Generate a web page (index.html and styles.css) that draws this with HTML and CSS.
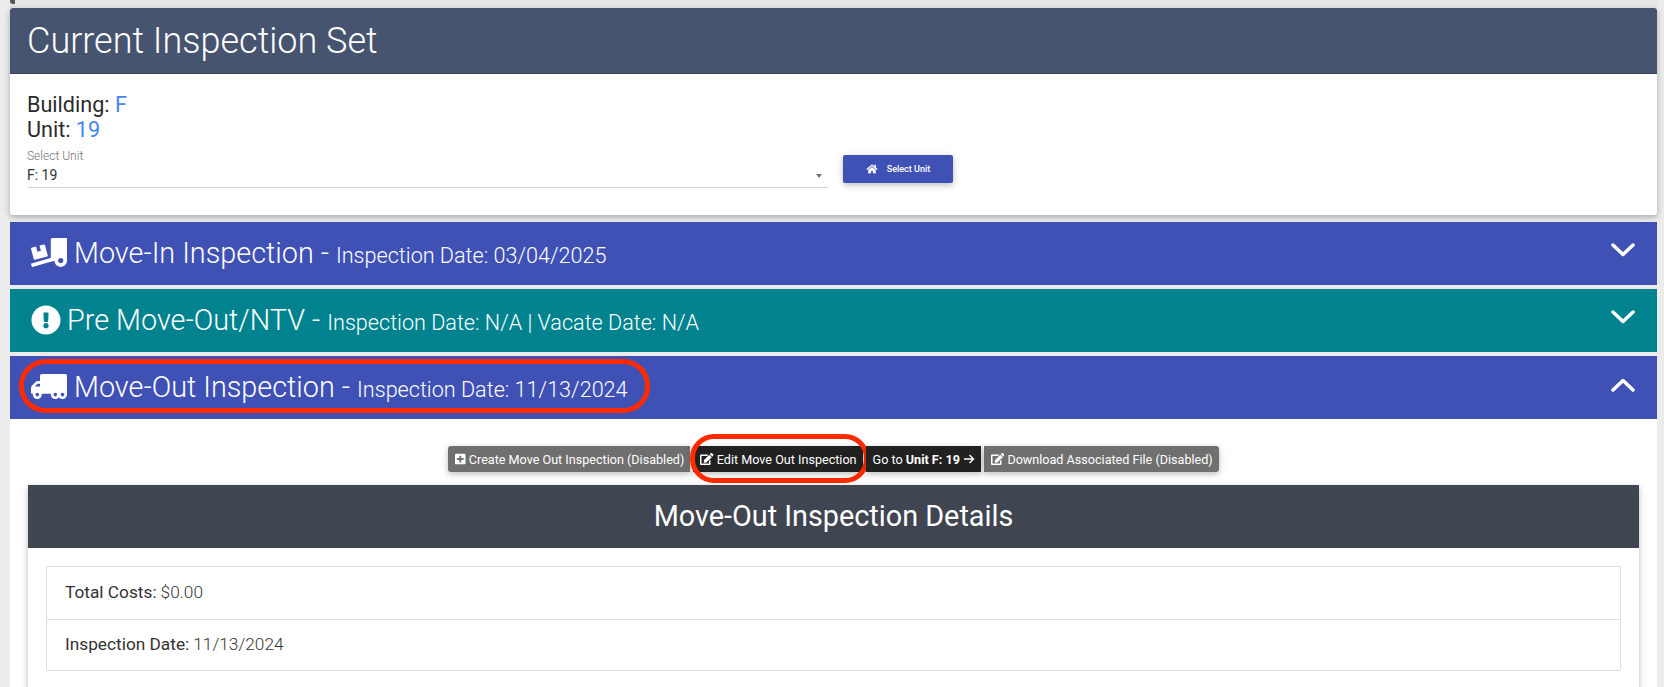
FILE: index.html
```html
<!DOCTYPE html>
<html lang="en">
<head>
<meta charset="utf-8">
<title>Current Inspection Set</title>
<link rel="stylesheet" href="styles.css">
</head>
<body>
<div class="topbar"><span class="topbar-tab"></span></div>
<section class="card">
  <h1 class="card-head">Current Inspection Set</h1>
  <div class="card-body">
    <div class="info">Building: <span class="accent">F</span></div>
    <div class="info">Unit: <span class="accent">19</span></div>
    <div class="unit-row">
      <div class="select">
        <div class="select-label">Select Unit</div>
        <div class="select-value">F: 19<span class="caret"></span></div>
      </div>
      <button class="select-btn" type="button">
        <svg class="home" viewBox="0 0 576 512"><path d="M280.37 148.26L96 300.11V464a16 16 0 0 0 16 16l112.06-.29a16 16 0 0 0 15.92-16V368a16 16 0 0 1 16-16h64a16 16 0 0 1 16 16v95.64a16 16 0 0 0 16 16.05L464 480a16 16 0 0 0 16-16V300L295.67 148.26a12.19 12.19 0 0 0-15.3 0zM571.6 251.47L488 182.56V44.05a12 12 0 0 0-12-12h-56a12 12 0 0 0-12 12v72.61L318.47 43a48 48 0 0 0-61 0L4.34 251.47a12 12 0 0 0-1.6 16.9l25.5 31A12 12 0 0 0 45.15 301l235.22-193.74a12.19 12.19 0 0 1 15.3 0L530.9 301a12 12 0 0 0 16.9-1.6l25.5-31a12 12 0 0 0-1.7-16.93z"/></svg>
        Select Unit
      </button>
    </div>
  </div>
</section>

<div class="panel panel-blue first">
  <div class="panel-title">
    <svg class="p-icon wide" viewBox="0 0 640 512"><path d="M50.2 375.6c2.3 8.5 11.1 13.6 19.6 11.3l216.4-58c8.5-2.3 13.6-11.1 11.3-19.6l-49.7-185.5c-2.3-8.5-11.1-13.6-19.6-11.3L151 133.3l24.8 92.7-61.8 16.5-24.8-92.7-77.3 20.7C3.4 172.8-1.7 181.6.6 190.1l49.6 185.5zM384 0c-17.7 0-32 14.3-32 32v323.6L5.9 450c-4.3 1.2-6.8 5.6-5.6 9.8l12.6 46.3c1.2 4.3 5.6 6.8 9.8 5.6l393.7-107.4C418.8 464.1 467.6 512 528 512c61.9 0 112-50.1 112-112V0H384zm144 448c-26.5 0-48-21.5-48-48s21.5-48 48-48 48 21.5 48 48-21.5 48-48 48z"/></svg>
    <span class="big">Move-In Inspection -</span> <span class="small">Inspection Date: 03/04/2025</span>
  </div>
  <svg class="chev" viewBox="0 0 24 14"><path d="M2 2l10 9.500L22 2"/></svg>
</div>

<div class="panel panel-teal">
  <div class="panel-title">
    <svg class="p-icon round" viewBox="0 0 512 512"><path d="M504 256c0 136.997-111.043 248-248 248S8 392.997 8 256C8 119.083 119.043 8 256 8s248 111.083 248 248zm-248 50c-25.405 0-46 20.595-46 46s20.595 46 46 46 46-20.595 46-46-20.595-46-46-46zm-43.673-165.346l7.418 136c.347 6.364 5.609 11.346 11.982 11.346h48.546c6.373 0 11.635-4.982 11.982-11.346l7.418-136c.375-6.874-5.098-12.654-11.982-12.654h-63.383c-6.884 0-12.356 5.78-11.981 12.654z"/></svg>
    <span class="big">Pre Move-Out/NTV -</span> <span class="small">Inspection Date: N/A | Vacate Date: N/A</span>
  </div>
  <svg class="chev" viewBox="0 0 24 14"><path d="M2 2l10 9.500L22 2"/></svg>
</div>

<div class="panel panel-blue">
  <div class="panel-title">
    <svg class="p-icon wide flip" viewBox="0 0 640 512"><path d="M621.3 237.3l-58.5-58.5c-12-12-28.3-18.7-45.3-18.7H480V64c0-17.7-14.3-32-32-32H32C14.3 32 0 46.3 0 64v336c0 44.2 35.8 80 80 80 26.3 0 49.4-12.9 64-32.4 14.6 19.6 37.7 32.4 64 32.4 44.2 0 80-35.8 80-80 0-5.5-.6-10.8-1.6-16h163.2c-1.1 5.2-1.6 10.5-1.6 16 0 44.2 35.8 80 80 80s80-35.8 80-80c0-5.5-.6-10.8-1.6-16H624c8.8 0 16-7.2 16-16v-85.5c0-17-6.7-33.2-18.7-45.2zM80 432c-17.6 0-32-14.4-32-32s14.4-32 32-32 32 14.4 32 32-14.4 32-32 32zm128 0c-17.6 0-32-14.4-32-32s14.4-32 32-32 32 14.400 32 32-14.400 32-32 32zm272-224h37.5c4.3 0 8.3 1.7 11.3 4.7l43.3 43.3H480v-48zm48 224c-17.6 0-32-14.4-32-32s14.4-32 32-32 32 14.4 32 32-14.4 32-32 32z"/></svg>
    <span class="big">Move-Out Inspection -</span> <span class="small">Inspection Date: 11/13/2024</span>
  </div>
  <svg class="chev chev-up" viewBox="0 0 24 14"><path d="M2 12l10-9.500L22 12"/></svg>
  <span class="oval oval-panel"></span>
</div>

<main class="content">
  <div class="actions">
    <a class="btn btn-gray btn-first">
      <svg class="b-icon" viewBox="0 0 448 512"><path d="M400 32H48C21.5 32 0 53.5 0 80v352c0 26.5 21.5 48 48 48h352c26.5 0 48-21.5 48-48V80c0-26.500-21.500-48-48-48zm-32 252c0 6.6-5.4 12-12 12h-92v92c0 6.600-5.400 12-12 12h-56c-6.600 0-12-5.400-12-12v-92H92c-6.600 0-12-5.400-12-12v-56c0-6.600 5.400-12 12-12h92v-92c0-6.600 5.400-12 12-12h56c6.600 0 12 5.400 12 12v92h92c6.600 0 12 5.400 12 12v56z"/></svg>
      Create Move Out Inspection (Disabled)
    </a>
    <a class="btn btn-dark">
      <svg class="b-icon" viewBox="0 0 576 512"><path d="M402.6 83.2l90.2 90.2c3.8 3.8 3.8 10 0 13.8L274.4 405.6l-92.8 10.3c-12.4 1.4-22.9-9.1-21.5-21.5l10.3-92.8L388.8 83.2c3.8-3.8 10-3.8 13.8 0zm162-22.9l-48.8-48.8c-15.2-15.2-39.9-15.2-55.2 0l-35.4 35.4c-3.8 3.8-3.8 10 0 13.8l90.2 90.2c3.8 3.8 10 3.8 13.8 0l35.4-35.4c15.2-15.3 15.2-40 0-55.2zM384 346.2V448H64V128h229.8c3.2 0 6.2-1.3 8.5-3.5l40-40c7.6-7.6 2.2-20.5-8.5-20.5H48C21.5 64 0 85.5 0 112v352c0 26.5 21.5 48 48 48h352c26.5 0 48-21.5 48-48V306.2c0-10.7-12.9-16-20.5-8.5l-40 40c-2.2 2.3-3.5 5.3-3.5 8.5z"/></svg>
      Edit Move Out Inspection
      <span class="oval oval-btn"></span>
    </a>
    <a class="btn btn-dark">
      Go to&nbsp;<strong>Unit F: 19</strong>
      <svg class="arrow" viewBox="0 0 12 12"><path d="M1 6h9.500M6.500 2l4 4-4 4"/></svg>
    </a>
    <a class="btn btn-gray btn-last">
      <svg class="b-icon" viewBox="0 0 576 512"><path d="M402.6 83.2l90.2 90.2c3.8 3.8 3.8 10 0 13.8L274.4 405.6l-92.8 10.3c-12.4 1.4-22.9-9.1-21.5-21.5l10.3-92.8L388.8 83.2c3.8-3.8 10-3.8 13.8 0zm162-22.9l-48.8-48.8c-15.2-15.2-39.9-15.2-55.2 0l-35.4 35.4c-3.8 3.8-3.8 10 0 13.8l90.2 90.2c3.8 3.8 10 3.8 13.8 0l35.4-35.4c15.2-15.3 15.2-40 0-55.2zM384 346.2V448H64V128h229.8c3.2 0 6.2-1.3 8.5-3.5l40-40c7.6-7.6 2.2-20.5-8.5-20.5H48C21.5 64 0 85.5 0 112v352c0 26.5 21.5 48 48 48h352c26.5 0 48-21.5 48-48V306.2c0-10.7-12.9-16-20.5-8.5l-40 40c-2.2 2.3-3.5 5.3-3.5 8.5z"/></svg>
      Download Associated File (Disabled)
    </a>
  </div>
  <section class="details">
    <h2 class="details-head">Move-Out Inspection Details</h2>
    <div class="details-body">
      <ul class="list">
        <li><span class="lbl">Total Costs:</span> $0.00</li>
        <li><span class="lbl">Inspection Date:</span> 11/13/2024</li>
      </ul>
    </div>
  </section>
</main>
</body>
</html>
```
FILE: styles.css
```css
* { box-sizing: border-box; }
html, body { margin: 0; height: 687px; overflow: hidden; }
body {
  padding: 0 7px 0 10px;
  background: #ececec;
  font-family: Roboto, "Liberation Sans", sans-serif;
  color: #212529;
}
.topbar { height: 8px; background: linear-gradient(#e4e5e6 0 5px, #dedfe1 5px); position: relative; }
.topbar-tab { display: block; width: 5px; height: 4px; background: #55585c; border-radius: 0 0 0 3px; }
.card {
  height: 207px;
  background: #fff;
  border-radius: 3px;
  box-shadow: 0 2px 5px rgba(0,0,0,.2), 0 2px 10px rgba(0,0,0,.1);
}
.card-head {
  margin: 0;
  height: 66px;
  padding: 0 17px;
  display: flex;
  align-items: center;
  background: #47546f;
  border-bottom: 1px solid #3a4559;
  border-radius: 3px 3px 0 0;
  color: #fff;
  font-size: 36px;
  font-weight: 300;
}
.card-body { padding: 18px 18px 0 18px; }
.info { font-size: 21.600px; line-height: 25px; font-weight: 400; color: #2b2b2b; margin-left: -1px; }
.accent { color: #4285f4; font-weight: 400; }
.unit-row { display: flex; align-items: flex-start; }
.select { width: 800px; position: relative; padding-top: 7px; }
.select-label { font-size: 12px; line-height: 14px; font-weight: 300; color: #757575; margin-left: -1px; }
.select-value {
  position: relative;
  margin-top: 3px;
  height: 22px;
  font-size: 14px;
  line-height: 18px;
  font-weight: 400;
  color: #333;
  border-bottom: 1px solid #ced4da;
  text-indent: -1px;
}
.caret {
  position: absolute;
  right: 6px;
  top: 8px;
  border: 3.500px solid transparent;
  border-top: 4px solid #757575;
  border-bottom: 0;
}
.select-btn {
  display: flex;
  align-items: center;
  justify-content: center;
  width: 110px;
  height: 28px;
  margin: 13px 0 0 15px;
  padding: 0;
  border: 0;
  border-radius: 2px;
  background: #3f51b5;
  color: #fff;
  font: 500 9px Roboto, sans-serif;
  box-shadow: 0 2px 5px rgba(0,0,0,.16), 0 2px 10px rgba(0,0,0,.12);
}
.home { width: 12px; height: 10px; margin-right: 9px; fill: #fff; }
.panel {
  position: relative;
  display: flex;
  align-items: center;
  justify-content: space-between;
  height: 63px;
  margin-top: 4px;
  padding: 0 22px 0 21px;
  color: #fff;
}
.panel.first { margin-top: 7px; }
.panel-blue { background: #3f51b5; }
.panel-teal { background: #00838f; }
.panel-title { display: flex; align-items: baseline; white-space: pre; padding-bottom: 2px; }
.p-icon { fill: #fff; align-self: center; flex: none; }
.wide { width: 36px; height: 29px; margin-right: 7px; }
.round { width: 30px; height: 30px; margin-right: 6px; }
.flip { transform: scaleX(-1); }
.big { font-size: 28.800px; font-weight: 300; }
.small { font-size: 21.600px; font-weight: 300; margin-left: 7px; }
.chev { width: 24px; height: 14px; margin-bottom: 7px; fill: none; stroke: #fff; stroke-width: 3.500; stroke-linecap: round; stroke-linejoin: round; }
.chev-up { margin-bottom: 5px; }
.oval { position: absolute; border: 5px solid #ff2a00; pointer-events: none; }
.oval-panel { left: 9px; top: 3px; width: 631px; height: 54px; border-radius: 27px / 26px; }
.oval-btn { left: -3px; top: -12px; width: 179px; height: 49px; border-radius: 24px; }
.content { height: 268px; background: #fff; padding: 27px 18px 0; }
.actions { display: flex; justify-content: center; gap: 3px; }
.btn {
  position: relative;
  display: flex;
  align-items: center;
  height: 26px;
  padding: 0 6px 0 7px;
  color: #fff;
  font-size: 12.600px;
  font-weight: 400;
  white-space: nowrap;
  box-shadow: 0 2px 5px rgba(0,0,0,.16), 0 2px 10px rgba(0,0,0,.12);
}
.btn-gray { background: #6f6f6f; }
.btn-dark { background: #212121; }
.btn-first { border-radius: 3px 0 0 3px; }
.btn-last { border-radius: 0 3px 3px 0; }
.btn strong { font-weight: 700; }
.b-icon { height: 12px; width: auto; fill: #fff; margin-right: 3px; flex: none; }
.arrow { width: 12px; height: 12px; margin-left: 3px; fill: none; stroke: #fff; stroke-width: 1.400; }
.details {
  margin-top: 13px;
  background: #fff;
  border-radius: 3px 3px 0 0;
  box-shadow: 0 2px 5px rgba(0,0,0,.16), 0 2px 10px rgba(0,0,0,.12);
}
.details-head {
  margin: 0;
  height: 63px;
  padding-bottom: 2px;
  display: flex;
  align-items: center;
  justify-content: center;
  background: #3f4551;
  color: #fff;
  font-size: 28.800px;
  font-weight: 400;
}
.details-body { padding: 18px 18px 40px; }
.list { list-style: none; margin: 0; padding: 0; border: 1px solid #dfdfdf; border-radius: 2px; }
.list li {
  height: 51.500px;
  padding: 0 18px 2px;
  display: flex;
  align-items: center;
  gap: 4px;
  font-size: 17.280px;
  font-weight: 300;
  color: #333;
}
.list li + li { border-top: 1px solid #dfdfdf; }
.lbl { font-weight: 400; }
```
